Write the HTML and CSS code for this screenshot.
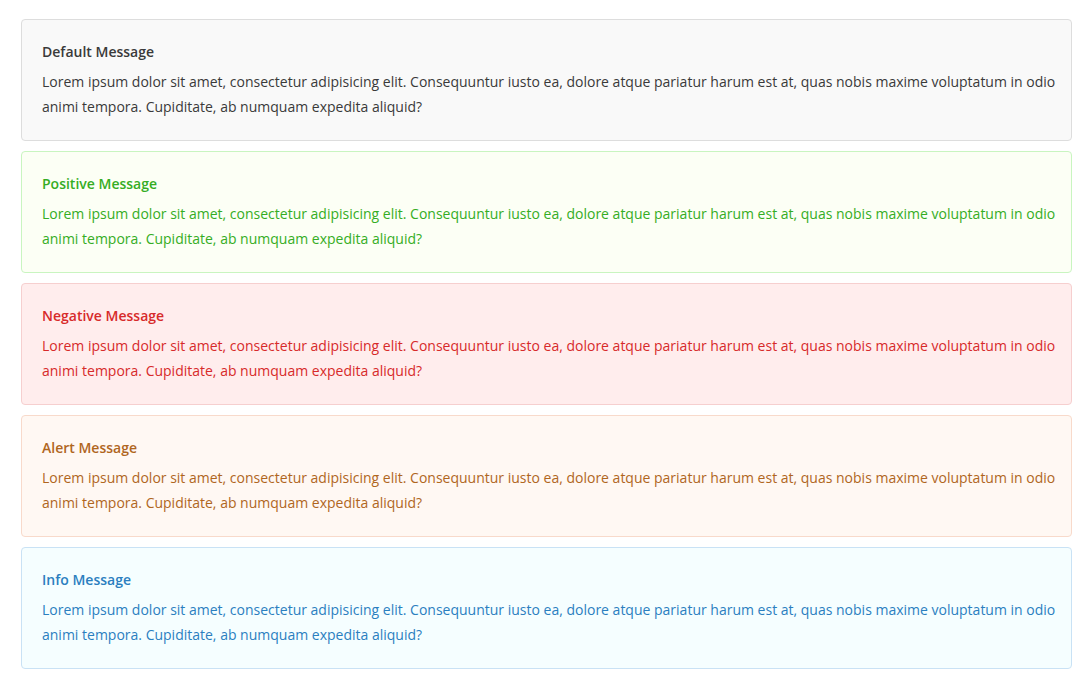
FILE: index.html
```html
<!DOCTYPE html>
<html>
<head>
<meta charset="utf-8">
<link rel="stylesheet" href="styles.css">
</head>
<body>
<div class="stack">
  <div class="msg msg-default">
    <div class="msg-title">Default Message</div>
    <p class="msg-text">Lorem ipsum dolor sit amet, consectetur adipisicing elit. Consequuntur iusto ea, dolore atque pariatur harum est at, quas nobis maxime voluptatum in odio animi tempora. Cupiditate, ab numquam expedita aliquid?</p>
  </div>
  <div class="msg msg-positive">
    <div class="msg-title">Positive Message</div>
    <p class="msg-text">Lorem ipsum dolor sit amet, consectetur adipisicing elit. Consequuntur iusto ea, dolore atque pariatur harum est at, quas nobis maxime voluptatum in odio animi tempora. Cupiditate, ab numquam expedita aliquid?</p>
  </div>
  <div class="msg msg-negative">
    <div class="msg-title">Negative Message</div>
    <p class="msg-text">Lorem ipsum dolor sit amet, consectetur adipisicing elit. Consequuntur iusto ea, dolore atque pariatur harum est at, quas nobis maxime voluptatum in odio animi tempora. Cupiditate, ab numquam expedita aliquid?</p>
  </div>
  <div class="msg msg-alert">
    <div class="msg-title">Alert Message</div>
    <p class="msg-text">Lorem ipsum dolor sit amet, consectetur adipisicing elit. Consequuntur iusto ea, dolore atque pariatur harum est at, quas nobis maxime voluptatum in odio animi tempora. Cupiditate, ab numquam expedita aliquid?</p>
  </div>
  <div class="msg msg-info">
    <div class="msg-title">Info Message</div>
    <p class="msg-text">Lorem ipsum dolor sit amet, consectetur adipisicing elit. Consequuntur iusto ea, dolore atque pariatur harum est at, quas nobis maxime voluptatum in odio animi tempora. Cupiditate, ab numquam expedita aliquid?</p>
  </div>
</div>
</body>
</html>
```

FILE: styles.css
```css
html, body {
  margin: 0;
  background: #ffffff;
}
body {
  padding: 19px 19px 0 21px;
  font-family: "Open Sans", "Noto Sans", sans-serif;
}
.stack {
  display: flex;
  flex-direction: column;
  gap: 10px;
}
.msg {
  border: 1px solid #dddddd;
  border-radius: 4px;
  padding: 21px 14px 21px 20px;
  background: #f9f9f9;
  color: #3a3a3a;
}
.msg-title {
  font-size: 14px;
  font-weight: 600;
  line-height: 22px;
  margin-bottom: 6px;
}
.msg-text {
  margin: 0;
  font-size: 14px;
  line-height: 25px;
}
.msg-positive {
  background: #fcfff5;
  border-color: #c9f5c0;
  color: #35ad24;
}
.msg-negative {
  background: #ffeded;
  border-color: #f6cfcf;
  color: #d72a2a;
}
.msg-alert {
  background: #fff8f3;
  border-color: #f8dacb;
  color: #b0661e;
}
.msg-info {
  background: #f5feff;
  border-color: #c9e2f5;
  color: #2b7fbf;
}
```
